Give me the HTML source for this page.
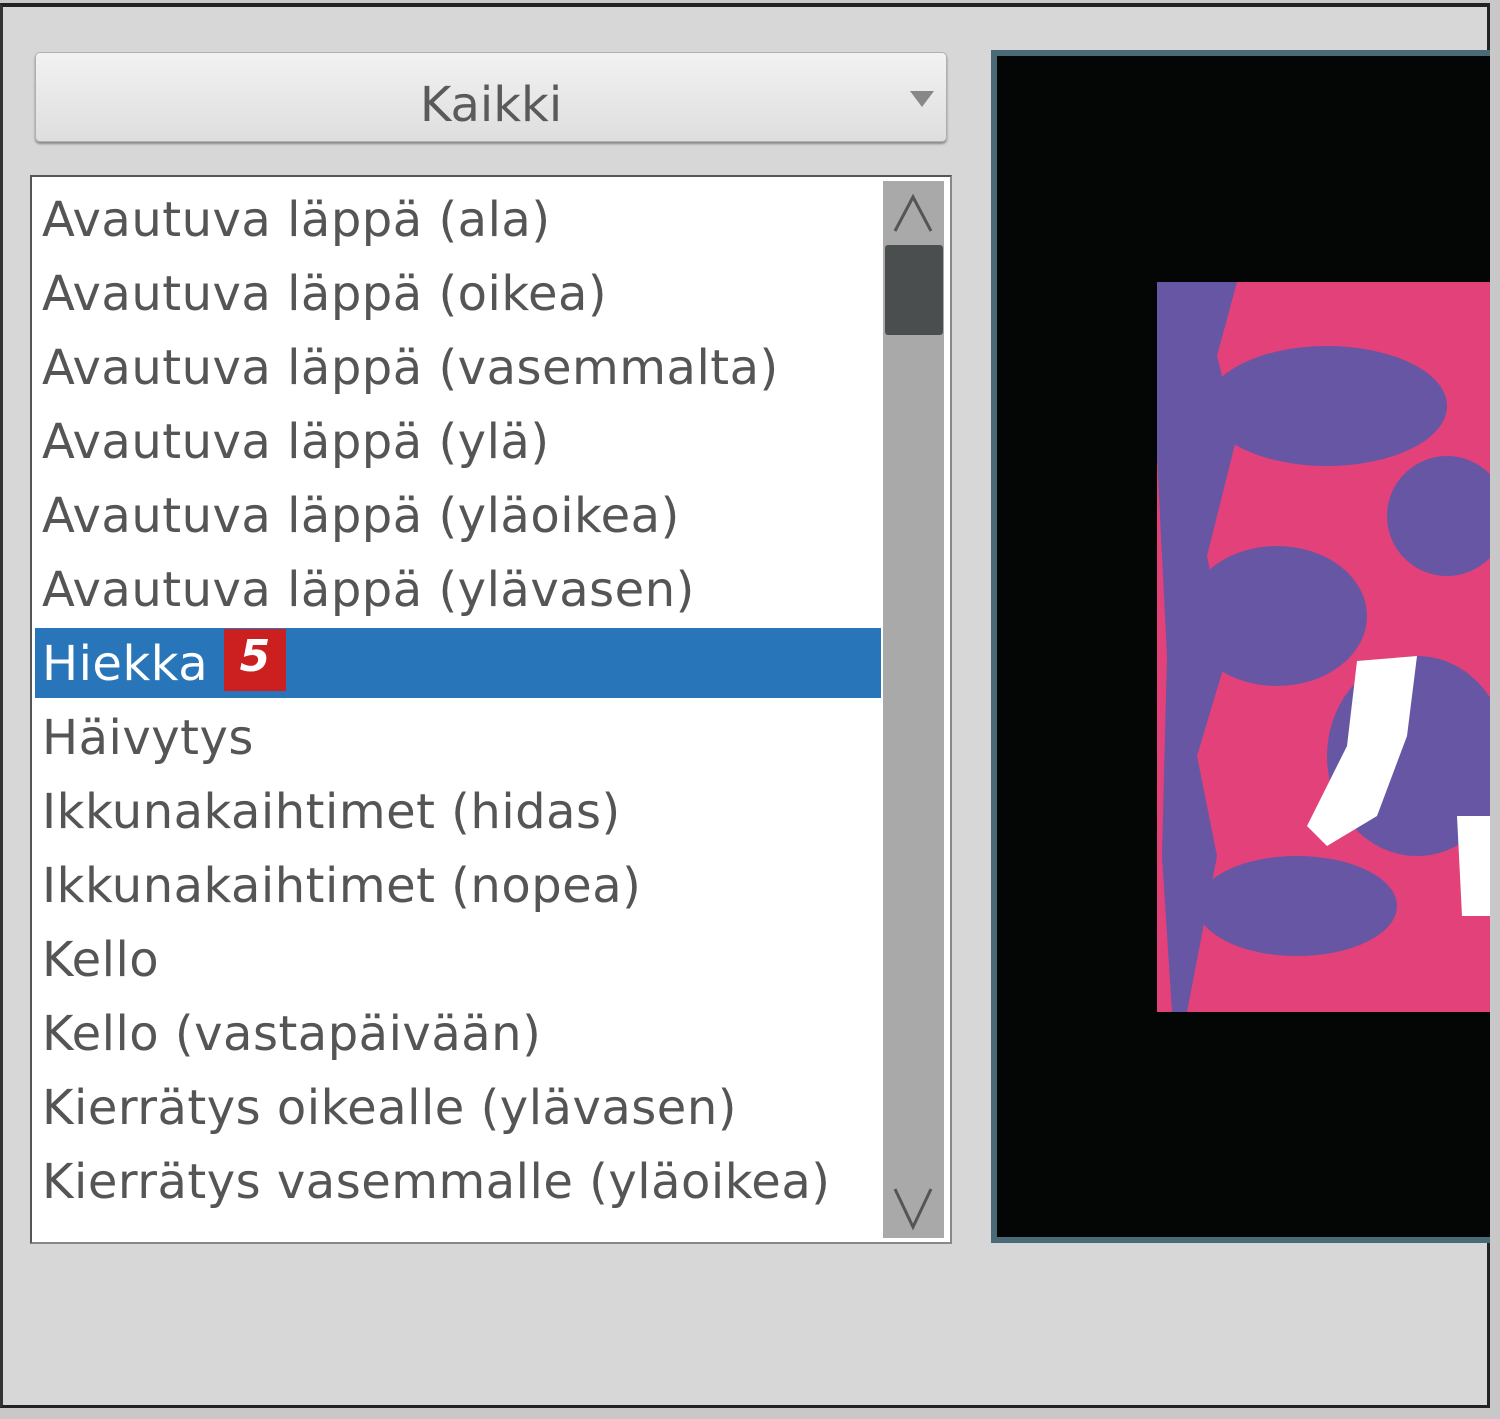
<!DOCTYPE html>
<html><head><meta charset="utf-8"><style>
body{margin:0;width:1500px;height:1419px;background:#c8c8c8;overflow:hidden;font-family:"DejaVu Sans","Liberation Sans",sans-serif;position:relative}
.win{position:absolute;left:0;top:3px;width:1490px;height:1405px;background:#d7d7d7;border-top:4px solid #222;border-left:3px solid #333;border-right:3px solid #222;border-bottom:3px solid #222;box-sizing:border-box}
.combo{position:absolute;left:35px;top:52px;width:912px;height:90px;border:1px solid #b0b0b0;border-radius:5px;background:linear-gradient(#f2f2f2,#dedede);box-shadow:0 2px 2px #888;box-sizing:border-box;text-align:center;font-size:48px;line-height:104px;color:#5a5a5a}
.arrow{position:absolute;right:12px;top:38px;width:0;height:0;border-left:12px solid transparent;border-right:12px solid transparent;border-top:16px solid #888}
.list{position:absolute;left:30px;top:175px;width:922px;height:1069px;background:#fff;border:2px solid #555;border-right-color:#888;border-bottom-color:#888;box-sizing:border-box}
.row{position:absolute;left:10px;height:70px;font-size:48px;line-height:70px;color:#555;white-space:nowrap;letter-spacing:0.5px}
.sel{position:absolute;left:3px;top:451px;width:846px;height:70px;background:#2875b9}
.badge{display:inline-block;background:#cc2020;color:#fff;font-weight:bold;font-style:italic;width:62px;height:62px;line-height:56px;text-align:center;vertical-align:top;font-size:44px;letter-spacing:0}
.sb{position:absolute;left:851px;top:4px;width:61px;height:1057px;background:#a9a9a9}
.thumb{position:absolute;left:2px;top:64px;width:58px;height:90px;background:#4a4e4e;border-radius:3px}
.prev{position:absolute;left:991px;top:50px;width:499px;height:1193px;background:#4a6a78;padding:6px 0 6px 6px;box-sizing:border-box}
.blk{width:100%;height:100%;background:#040606;position:relative;overflow:hidden}
</style></head><body>
<div class="win"></div>
<div class="combo">Kaikki<div class="arrow"></div></div>
<div class="list">
<div class="sel"></div>
<div class="row" style="top:8px">Avautuva läppä (ala)</div>
<div class="row" style="top:82px">Avautuva läppä (oikea)</div>
<div class="row" style="top:156px">Avautuva läppä (vasemmalta)</div>
<div class="row" style="top:230px">Avautuva läppä (ylä)</div>
<div class="row" style="top:304px">Avautuva läppä (yläoikea)</div>
<div class="row" style="top:378px">Avautuva läppä (ylävasen)</div>
<div class="row" style="top:452px;color:#fff">Hiekka <span class="badge">5</span></div>
<div class="row" style="top:526px">Häivytys</div>
<div class="row" style="top:600px">Ikkunakaihtimet (hidas)</div>
<div class="row" style="top:674px">Ikkunakaihtimet (nopea)</div>
<div class="row" style="top:748px">Kello</div>
<div class="row" style="top:822px">Kello (vastapäivään)</div>
<div class="row" style="top:896px">Kierrätys oikealle (ylävasen)</div>
<div class="row" style="top:970px">Kierrätys vasemmalle (yläoikea)</div>
<div class="sb"><div class="thumb"></div>
<svg style="position:absolute;left:0;top:0" width="61" height="1057"><path d="M12 50 L30 16 L48 50" stroke="#555" stroke-width="3" fill="none"/><path d="M12 1008 L30 1046 L48 1008" stroke="#555" stroke-width="3" fill="none"/></svg></div>
</div>
<div class="prev"><div class="blk">
<svg style="position:absolute;left:0;top:0" width="500" height="1190">
<rect x="160" y="226" width="340" height="730" fill="#e2417a"/>
<path d="M160 226 L240 226 L220 300 L240 380 L210 500 L230 600 L200 700 L220 800 L190 956 L175 956 L165 800 L170 600 L160 400 Z" fill="#6656a4"/>
<ellipse cx="330" cy="350" rx="120" ry="60" fill="#6656a4"/>
<ellipse cx="280" cy="560" rx="90" ry="70" fill="#6656a4"/>
<ellipse cx="420" cy="700" rx="90" ry="100" fill="#6656a4"/>
<ellipse cx="300" cy="850" rx="100" ry="50" fill="#6656a4"/>
<ellipse cx="450" cy="460" rx="60" ry="60" fill="#6656a4"/>
<path d="M360 605 L420 600 L410 680 L380 760 L330 790 L310 770 L350 690 Z" fill="#fff"/>
<path d="M460 760 L500 760 L500 860 L465 860 Z" fill="#fff"/>
</svg></div></div>
</body></html>
